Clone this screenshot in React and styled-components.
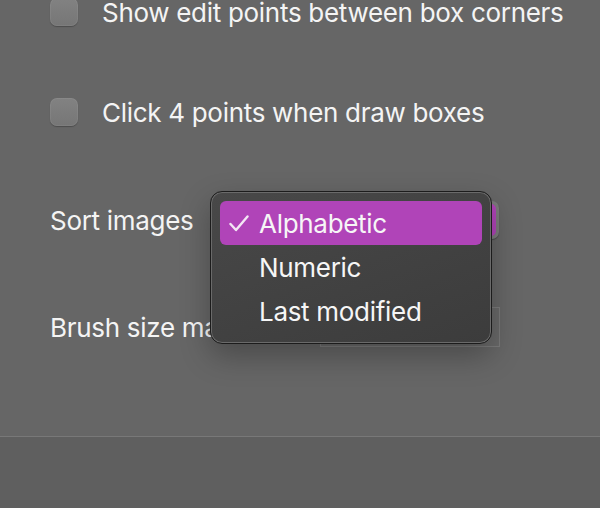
import React from "react";
import styled, { createGlobalStyle } from "styled-components";

const Global = createGlobalStyle`
  html, body {
    margin: 0;
    padding: 0;
    background: #666666;
    overflow: hidden;
  }
  body {
    font-family: Inter, "Noto Sans", "Liberation Sans", sans-serif;
    -webkit-font-smoothing: antialiased;
  }
`;

const Window = styled.div`
  width: 600px;
  height: 508px;
  display: flex;
  flex-direction: column;
  overflow: hidden;
`;

const Panel = styled.div`
  height: 436px;
  display: flex;
  flex-direction: column;
  padding-left: 50px;
  box-sizing: border-box;
  background: #666666;
`;

const Footer = styled.div`
  flex: 1;
  border-top: 1px solid #787878;
  background: #5f5f5f;
`;

const Row = styled.div`
  height: 40px;
  margin-top: ${(p) => p.$top}px;
  display: flex;
  align-items: center;
  gap: ${(p) => (p.$gap !== undefined ? p.$gap : 24)}px;
  position: relative;
`;

const Checkbox = styled.span`
  width: 28px;
  height: 28px;
  box-sizing: border-box;
  border-radius: 7px;
  background: linear-gradient(#828282, #767676);
  box-shadow: 0 1px 1px rgba(0, 0, 0, 0.25), inset 0 0 0 1px rgba(255, 255, 255, 0.06);
  flex-shrink: 0;
`;

const Label = styled.span`
  font-size: 26px;
  color: #f4f4f4;
  letter-spacing: -0.3px;
  white-space: nowrap;
  flex-shrink: 0;
  width: ${(p) => (p.$w ? `${p.$w}px` : "auto")};
`;

const SelectButton = styled.div`
  position: relative;
  width: 279px;
  height: 38px;
  border-radius: 7px;
  background: #7b7b7b;
  box-shadow: 0 1px 1px rgba(0, 0, 0, 0.3);
  display: flex;
  justify-content: flex-end;
`;

const SelectArrows = styled.span`
  width: 26px;
  margin: 3px;
  border-radius: 5px;
  background: #b044b8;
`;

const NumberField = styled.div`
  width: 180px;
  height: 40px;
  box-sizing: border-box;
  border: 1px solid #7a7a7a;
  background: #686868;
`;

const Menu = styled.div`
  position: absolute;
  left: -10px;
  top: -10px;
  width: 282px;
  height: 153px;
  box-sizing: border-box;
  padding: 9px;
  border-radius: 12px;
  border: 1px solid #1c1c1c;
  background: linear-gradient(160deg, #484848, #3c3c3c);
  box-shadow: inset 0 0 0 1px #6a6a6a, 0 12px 30px rgba(0, 0, 0, 0.28);
  display: flex;
  flex-direction: column;
  z-index: 2;
`;

const Item = styled.div`
  height: 44px;
  flex-shrink: 0;
  border-radius: 6px;
  display: flex;
  align-items: center;
  padding-left: 9px;
  font-size: 26px;
  letter-spacing: -0.3px;
  color: #f6f6f6;
  background: ${(p) => (p.$active ? "#b044b8" : "transparent")};
`;

const Check = styled.span`
  width: 30px;
  display: flex;
  align-items: center;
`;

const options = ["Alphabetic", "Numeric", "Last modified"];

export default function App() {
  return (
    <Window>
      <Global />
      <Panel>
        <Row $top={-8}>
          <Checkbox />
          <Label>Show edit points between box corners</Label>
        </Row>
        <Row $top={60}>
          <Checkbox />
          <Label>Click 4 points when draw boxes</Label>
        </Row>
        <Row $top={68} $gap={0}>
          <Label $w={170}>Sort images</Label>
          <SelectButton>
            <SelectArrows />
            <Menu>
              {options.map((o, i) => (
                <Item key={o} $active={i === 0}>
                  <Check>
                    {i === 0 && (
                      <svg width="20" height="17" viewBox="0 0 20 17">
                        <path
                          d="M1.5 9 L7 15 L18.5 1.5"
                          fill="none"
                          stroke="#f3e6f4"
                          strokeWidth="2.4"
                          strokeLinecap="round"
                          strokeLinejoin="round"
                        />
                      </svg>
                    )}
                  </Check>
                  {o}
                </Item>
              ))}
            </Menu>
          </SelectButton>
        </Row>
        <Row $top={67} $gap={0}>
          <Label $w={270}>Brush size max</Label>
          <NumberField />
        </Row>
      </Panel>
      <Footer />
    </Window>
  );
}
